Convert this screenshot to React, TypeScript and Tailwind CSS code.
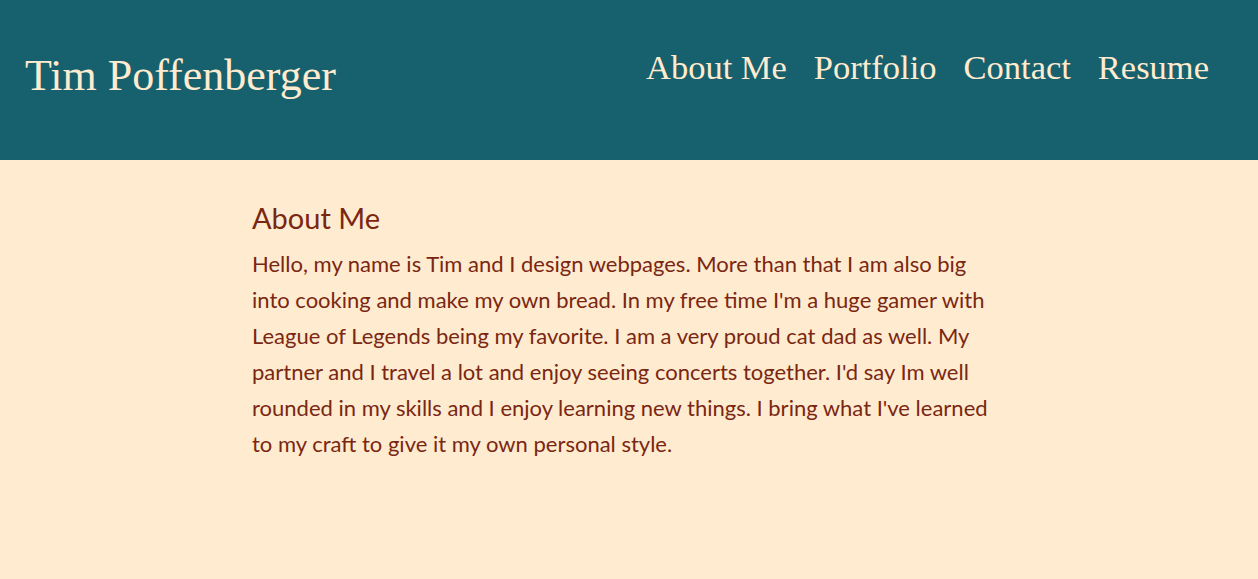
export default function App() {
  const links = ['About Me', 'Portfolio', 'Contact', 'Resume'];
  const lines = [
    'Hello, my name is Tim and I design webpages. More than that I am also big',
    "into cooking and make my own bread. In my free time I'm a huge gamer with",
    'League of Legends being my favorite. I am a very proud cat dad as well. My',
    "partner and I travel a lot and enjoy seeing concerts together. I'd say Im well",
    "rounded in my skills and I enjoy learning new things. I bring what I've learned",
    'to my craft to give it my own personal style.',
  ];

  return (
    <div className="min-h-[579px] bg-[#ffebcf]">
      <header className="h-[160px] bg-[#17616e] flex items-center justify-between pl-[25px] pr-[49px] font-['Liberation_Serif',serif] text-[#ffebcf]">
        <h1 className="text-[44px] leading-none pb-[9px]">Tim Poffenberger</h1>
        <nav className="flex gap-[27px] pb-[26px]">
          {links.map((l) => (
            <a key={l} href="#" className="text-[34.5px] leading-none">
              {l}
            </a>
          ))}
        </nav>
      </header>

      <main className="w-[754px] mx-auto pt-[40px] text-[#7a2712] font-['Lato',sans-serif]">
        <h2 className="text-[29px] leading-[36px] mb-[10px]">About Me</h2>
        <p className="text-[22px] leading-[36px]">
          {lines.map((line) => (
            <span key={line} className="block whitespace-nowrap">
              {line}
            </span>
          ))}
        </p>
      </main>
    </div>
  );
}
